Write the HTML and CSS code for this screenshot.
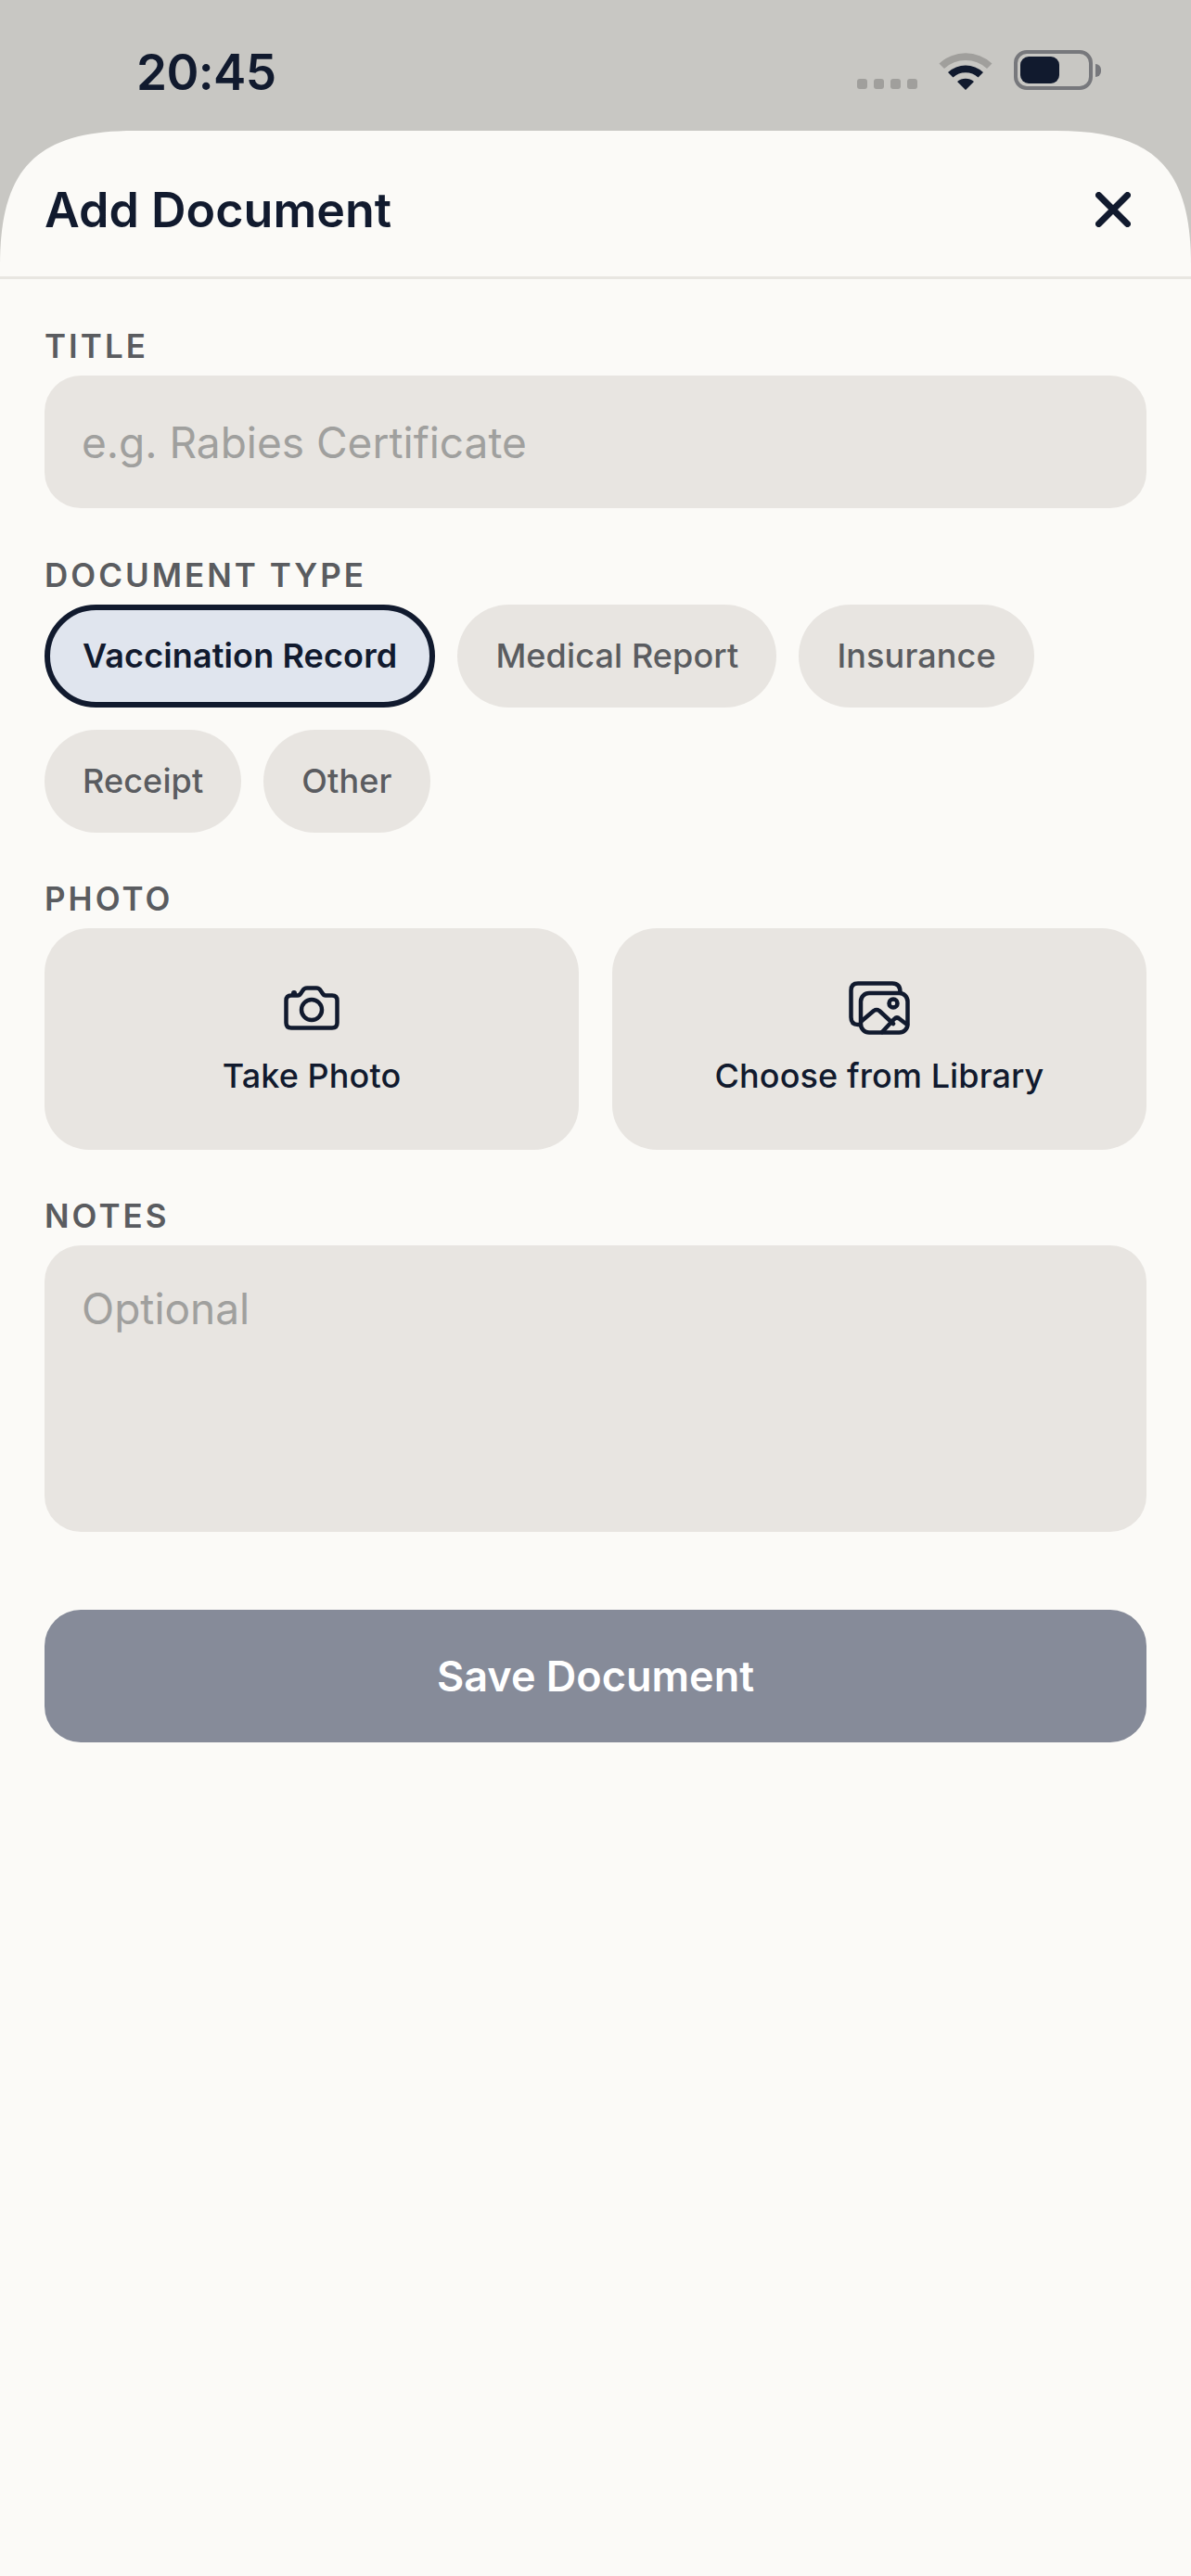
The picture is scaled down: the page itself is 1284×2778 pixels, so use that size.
FILE: index.html
```html
<!DOCTYPE html>
<html lang="en">
<head>
<meta charset="utf-8">
<title>Add Document</title>
<link rel="stylesheet" href="styles.css">
</head>
<body>
<div class="status">
  <span class="time">20:45</span>
  <div class="status-icons">
    <div class="signal"><i></i><i></i><i></i><i></i></div>
    <svg class="wifi" width="58" height="43" viewBox="0 0 58 43">
      <path d="M0.5 14.5 A42 42 0 0 1 57.5 14.5 L52 20 A34 34 0 0 0 6 20 Z" fill="#a09f9c"/>
      <path d="M10 24 A28 28 0 0 1 48 24 L42.500 29.500 A20 20 0 0 0 15.500 29.500 Z M20 34 A14 14 0 0 1 38 34 L29 43 Z" fill="#111a2e"/>
    </svg>
    <div class="battery"><div class="battery-body"><div class="battery-level"></div></div><div class="battery-cap"></div></div>
  </div>
</div>
<main class="sheet">
  <header class="sheet-head">
    <h1>Add Document</h1>
    <svg class="close" width="38" height="38" viewBox="0 0 38 38"><path d="M3.500 3.500 L34.500 34.500 M34.500 3.500 L3.500 34.500" stroke="#111a2e" stroke-width="7" stroke-linecap="round"/></svg>
  </header>
  <form class="form">
    <section class="field">
      <label class="label">TITLE</label>
      <div class="input">e.g. Rabies Certificate</div>
    </section>
    <section class="field">
      <label class="label">DOCUMENT TYPE</label>
      <div class="chips">
        <span class="chip chip-on">Vaccination Record</span>
        <span class="chip">Medical Report</span>
        <span class="chip">Insurance</span>
        <span class="chip">Receipt</span>
        <span class="chip">Other</span>
      </div>
    </section>
    <section class="field">
      <label class="label">PHOTO</label>
      <div class="photo-row">
        <div class="photo-btn">
          <svg width="60" height="58" viewBox="0 -5 60 58" fill="none" stroke="#111a2e" stroke-width="4.500" stroke-linejoin="round">
            <path d="M8 10.500 H15 Q17 10.500 18.500 8 L20.500 5 Q22 2.500 25 2.500 H35 Q38 2.500 39.500 5 L41.500 8 Q43 10.500 45 10.500 H52 Q57.500 10.500 57.500 16 V40 Q57.500 45.500 52 45.500 H8 Q2.500 45.500 2.500 40 V16 Q2.500 10.500 8 10.500 Z"/>
            <circle cx="30" cy="26" r="11"/>
            <path d="M11 9 V8" stroke-width="6" stroke-linecap="round"/>
          </svg>
          <span>Take Photo</span>
        </div>
        <div class="photo-btn">
          <svg width="66" height="58" viewBox="0 0 66 58" fill="none" stroke="#111a2e" stroke-width="4.500" stroke-linejoin="round" stroke-linecap="round">
            <path d="M12 47 H10 Q2.500 47 2.500 39 V10 Q2.500 2.500 10 2.500 H47 Q55.500 2.500 55.500 12"/>
            <rect x="13" y="13" width="50.500" height="42.500" rx="9"/>
            <circle cx="48" cy="24" r="4.500"/>
            <path d="M14 43 L27 32 Q30 30 33 32 L48 46 M36 55 L49 41 Q52 38 55 41 L63 47"/>
          </svg>
          <span>Choose from Library</span>
        </div>
      </div>
    </section>
    <section class="field">
      <label class="label">NOTES</label>
      <div class="input input-notes">Optional</div>
    </section>
    <div class="save">Save Document</div>
  </form>
</main>
</body>
</html>
```

FILE: styles.css
```css
* { box-sizing: border-box; }

html, body { margin: 0; height: 100%; }

body {
  background: #c8c7c3;
  font-family: Inter, "Liberation Sans", sans-serif;
  color: #111a2e;
  display: flex;
  flex-direction: column;
  overflow: hidden;
}

.status {
  height: 141px;
  flex: none;
  display: flex;
  justify-content: space-between;
  padding: 55px 97px 0 147px;
}

.time {
  font-size: 53px;
  font-weight: 600;
  line-height: 46px;
  letter-spacing: -0.6px;
}

.status-icons {
  display: flex;
  align-items: flex-start;
  margin-top: -1px;
}

.signal {
  display: flex;
  gap: 7px;
  margin: 31px 23px 0 0;
}

.signal i {
  width: 11px;
  height: 11px;
  border-radius: 3px;
  background: #a09f9c;
}

.wifi { margin-right: 23px; }

.battery {
  display: flex;
  align-items: center;
  gap: 3px;
}

.battery-body {
  width: 85px;
  height: 43px;
  border: 4px solid #77787c;
  border-radius: 14px;
  padding: 3px;
}

.battery-level {
  width: 42px;
  height: 29px;
  border-radius: 9px;
  background: #111a2e;
}

.battery-cap {
  width: 6px;
  height: 14px;
  border-radius: 0 7px 7px 0;
  background: #77787c;
}

/* continuous top corners that a plain border-radius cannot draw */
.sheet {
  flex: 1;
  background: #fbfaf7;
  clip-path: path("M0 145 C0 40 40 0 145 0 H1139 C1244 0 1284 40 1284 145 V2637 H0 Z");
}

.sheet-head {
  height: 160px;
  border-bottom: 3px solid #e8e6e1;
  padding: 13px 65px 0 48px;
  display: flex;
  align-items: center;
  justify-content: space-between;
}

.sheet-head h1 {
  margin: 0;
  font-size: 52px;
  font-weight: 600;
}

.form {
  padding: 51px 48px 0;
  display: flex;
  flex-direction: column;
  gap: 50.2px;
}

.label {
  display: block;
  font-size: 35px;
  line-height: 42px;
  font-weight: 600;
  letter-spacing: 3px;
  color: #5a5c60;
  margin-bottom: 11px;
}

.input {
  height: 143.400px;
  border-radius: 39px;
  background: #e8e5e1;
  padding: 0 39px 0 40px;
  display: flex;
  align-items: center;
  font-size: 46px;
  color: #a0a09e;
}

.input-notes {
  height: 309px;
  align-items: flex-start;
  padding-top: 40px;
}

.chips {
  display: flex;
  flex-wrap: wrap;
  gap: 24px;
}

.chip {
  height: 111px;
  padding: 0 41px;
  border-radius: 56px;
  background: #e8e5e1;
  display: flex;
  align-items: center;
  font-size: 36px;
  font-weight: 500;
  letter-spacing: 0.12px;
  color: #5a5c60;
}

.chip-on {
  background: #e0e5ee;
  border: 6px solid #111a2e;
  padding: 0 35px;
  color: #111a2e;
  font-weight: 600;
}

.photo-row {
  display: grid;
  grid-template-columns: 1fr 1fr;
  gap: 36px;
}

.photo-btn {
  height: 239px;
  border-radius: 48px;
  background: #e8e5e1;
  display: flex;
  flex-direction: column;
  align-items: center;
  justify-content: center;
  gap: 22px;
  font-size: 36px;
  line-height: 44px;
  font-weight: 500;
  letter-spacing: 0.1px;
}

.save {
  margin-top: 33.800px;
  height: 143px;
  border-radius: 39px;
  background: #868b99;
  color: #fff;
  display: flex;
  align-items: center;
  justify-content: center;
  font-size: 45px;
  font-weight: 600;
}
```
